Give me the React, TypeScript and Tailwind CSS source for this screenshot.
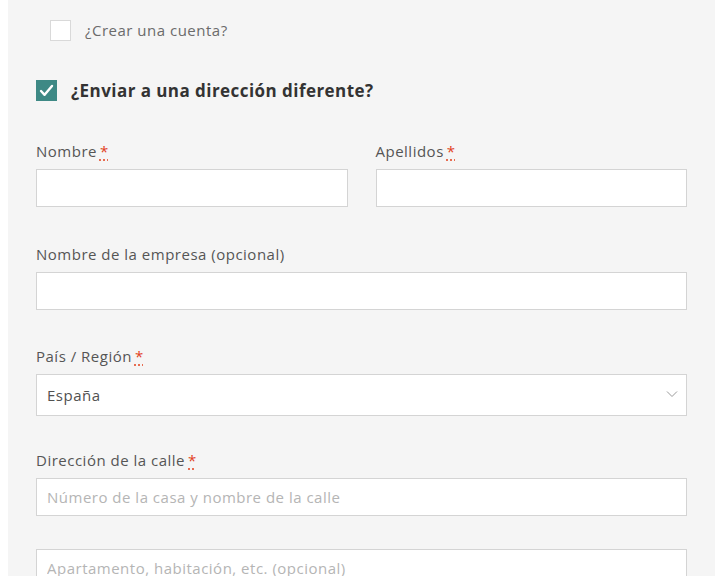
const font = { fontFamily: '"Open Sans", "Noto Sans", sans-serif' };

function Req() {
  return (
    <abbr title="obligatorio" className="ml-[3px] text-[#e2401c] no-underline underline decoration-dotted underline-offset-[3px]">
      *
    </abbr>
  );
}

function Label({ children, required }: { children: React.ReactNode; required?: boolean }) {
  return (
    <label className="block text-[15px] leading-[22px] tracking-[0.5px] text-[#555555] mb-[7px]">
      {children}
      {required && <Req />}
    </label>
  );
}

function Input({ placeholder }: { placeholder?: string }) {
  return (
    <input
      placeholder={placeholder}
      className="block w-full h-[38px] bg-white border border-[#d4d4d4] px-[10px] text-[15px] tracking-[0.5px] text-[#515151] placeholder:text-[#b5b5b5] outline-none"
      style={font}
    />
  );
}

export default function App() {
  return (
    <div className="min-h-screen bg-white" style={font}>
      <div className="ml-[8px] w-[707px] min-h-[576px] bg-[#f5f5f5] px-[28px] pt-[20px]">
        <label className="flex items-center ml-[14px] h-[21px]">
          <span className="w-[21px] h-[21px] bg-white border border-[#d9d9d9] shrink-0" />
          <span className="ml-[14px] text-[15px] tracking-[0.5px] text-[#6b6b6b]">¿Crear una cuenta?</span>
        </label>

        <label className="flex items-center mt-[39px] h-[21px]">
          <span className="w-[21px] h-[21px] bg-[#3e8985] shrink-0 flex items-center justify-center">
            <svg width="15" height="13" viewBox="0 0 15 13" fill="none">
              <path d="M2 7l3.6 3.8L13 2" stroke="white" strokeWidth="2.4" strokeLinecap="round" strokeLinejoin="round" />
            </svg>
          </span>
          <span className="ml-[14px] text-[17px] font-bold tracking-[0.45px] text-[#333333]">¿Enviar a una dirección diferente?</span>
        </label>

        <div className="mt-[39px] grid grid-cols-2 gap-x-[28px]">
          <div>
            <Label required>Nombre</Label>
            <Input />
          </div>
          <div>
            <Label required>Apellidos</Label>
            <Input />
          </div>
        </div>

        <div className="mt-[36px]">
          <Label>Nombre de la empresa (opcional)</Label>
          <Input />
        </div>

        <div className="mt-[35px]">
          <Label required>País / Región</Label>
          <div className="relative h-[42px] bg-white border border-[#d4d4d4] flex items-center px-[10px] pt-[1px] text-[15px] tracking-[0.5px] text-[#515151]">
            España
            <svg className="absolute right-[8px] top-[15px]" width="12" height="8" viewBox="0 0 12 8" fill="none">
              <path d="M1 1.5l5 5 5-5" stroke="#9a9a9a" strokeWidth="1" />
            </svg>
          </div>
        </div>

        <div className="mt-[33px]">
          <Label required>Dirección de la calle</Label>
          <Input placeholder="Número de la casa y nombre de la calle" />
        </div>

        <div className="mt-[33px]">
          <Input placeholder="Apartamento, habitación, etc. (opcional)" />
        </div>
      </div>
    </div>
  );
}
